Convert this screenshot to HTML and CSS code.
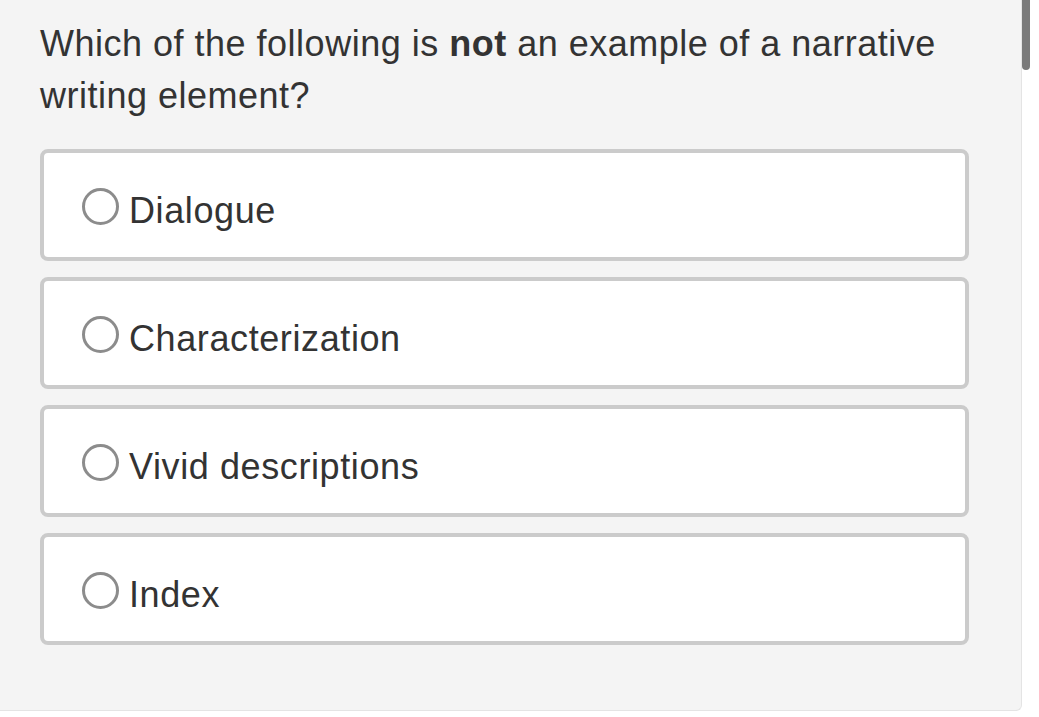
FILE: index.html
```html
<!DOCTYPE html>
<html>
<head>
    <title>Quiz Question</title>
    <link rel="stylesheet" href="styles.css">
</head>
<body>
    <div class="page">
        <div class="panel">
            <p class="question">Which of the following is <strong>not</strong> an example of a narrative<br>writing element?</p>
            <div class="options">
                <label class="option"><span class="radio"></span><span class="option-label">Dialogue</span></label>
                <label class="option"><span class="radio"></span><span class="option-label">Characterization</span></label>
                <label class="option"><span class="radio"></span><span class="option-label">Vivid descriptions</span></label>
                <label class="option"><span class="radio"></span><span class="option-label">Index</span></label>
            </div>
        </div>
        <div class="scroll-thumb"></div>
    </div>
</body>
</html>
```

FILE: styles.css
```css
body {
    margin: 0;
    background: #fff;
    font-family: "Liberation Sans", Arial, sans-serif;
    color: #333;
}
.page {
    position: relative;
    width: 1039px;
    height: 717px;
}
.panel {
    box-sizing: border-box;
    width: 1022px;
    height: 711px;
    padding: 18px 52px 0 40px;
    background: #f4f4f4;
    border-right: 1px solid #e4e4e4;
    border-bottom: 1px solid #e4e4e4;
    border-bottom-right-radius: 6px;
}
.question {
    margin: 0;
    font-size: 36px;
    line-height: 52px;
    letter-spacing: 0.5px;
}
.question strong {
    font-weight: bold;
}
.options {
    display: flex;
    flex-direction: column;
    gap: 16px;
    margin-top: 27px;
}
.option {
    box-sizing: border-box;
    display: flex;
    align-items: center;
    height: 112px;
    padding: 2px 38px 0 38px;
    background: #fff;
    border: 4px solid #cbcbcb;
    border-radius: 8px;
    cursor: pointer;
}
.radio {
    box-sizing: border-box;
    flex: none;
    width: 37px;
    height: 37px;
    margin-right: 10px;
    border: 3px solid #8c8c8c;
    border-radius: 50%;
}
.option-label {
    padding-top: 10px;
    font-size: 36px;
    line-height: 36px;
    letter-spacing: 0.6px;
}
.scroll-thumb {
    position: absolute;
    top: 0;
    left: 1022px;
    width: 8px;
    height: 70px;
    background: #7a7a7a;
    border-radius: 0 0 4px 4px;
}
```
